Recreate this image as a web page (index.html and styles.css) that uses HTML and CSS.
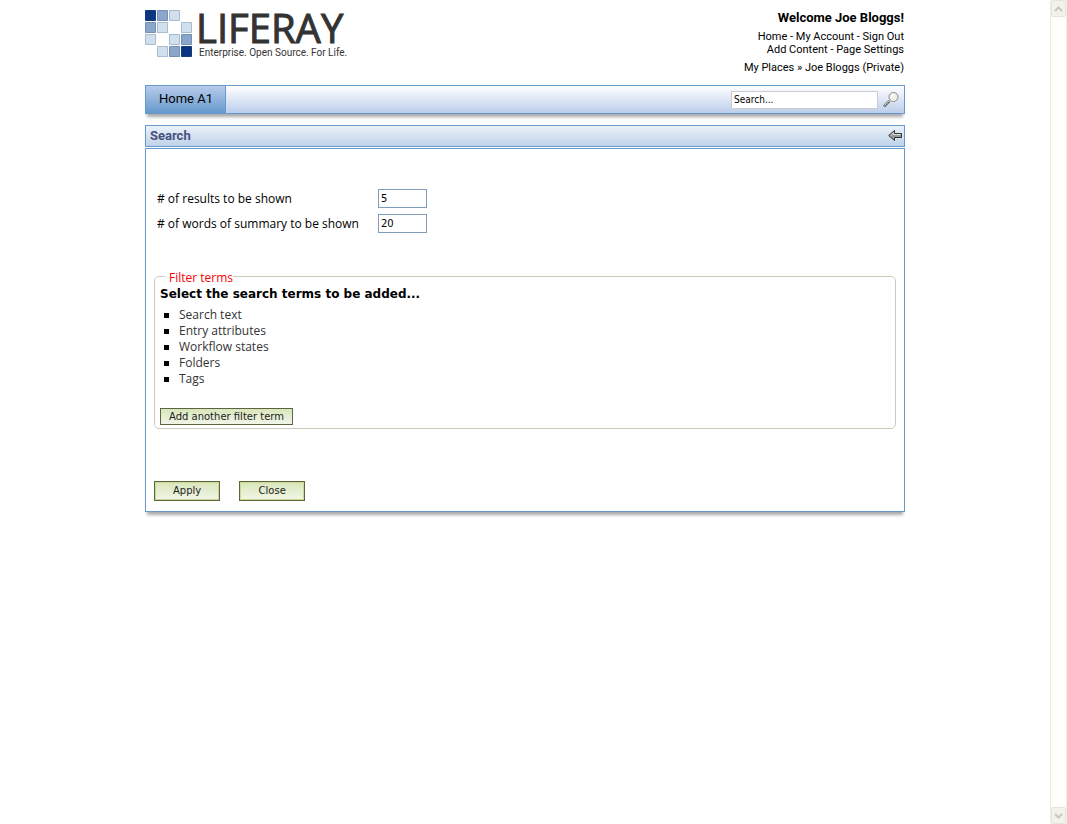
FILE: index.html
```html
<!DOCTYPE html>
<html lang="en">
<head>
<meta charset="utf-8">
<title>Search</title>
<link rel="stylesheet" href="styles.css">
</head>
<body>
<div class="page">
  <header class="banner">
    <a class="logo" href="#">
      <svg class="logo-mark" width="48" height="48" viewBox="0 0 48 48" aria-hidden="true">
        <g stroke-width="1">
          <path fill="#0b3580" stroke="#163c80" d="M.5.5h10v10h-10zM36.5 36.5h10v10h-10z"/>
          <path fill="#8ba6cb" stroke="#7590b4" d="M12.5.5h10v10h-10zM.5 12.5h10v10h-10zM36.5 24.5h10v10h-10zM24.5 36.5h10v10h-10z"/>
          <path fill="#d1e0ef" stroke="#a9bccd" d="M24.5.5h10v10h-10zM12.5 12.5h10v10h-10zM36.5 12.5h10v10h-10zM.5 24.5h10v10h-10zM24.5 24.5h10v10h-10zM12.5 36.5h10v10h-10z"/>
        </g>
      </svg>
      <span class="logo-words">
        <span class="logo-name">LIFERAY</span>
        <span class="logo-tag">Enterprise. Open Source. For Life.</span>
      </span>
    </a>
    <div class="user">
      <h2 class="welcome">Welcome Joe Bloggs!</h2>
      <div><a href="#">Home</a> - <a href="#">My Account</a> - <a href="#">Sign Out</a></div>
      <div><a href="#">Add Content</a> - <a href="#">Page Settings</a></div>
      <div class="places"><a href="#">My Places</a> » <a href="#">Joe Bloggs (Private)</a></div>
    </div>
  </header>

  <nav class="navbar">
    <a class="tab" href="#">Home A1</a>
    <form class="site-search">
      <input class="search-box" type="text" value="Search..." aria-label="Search">
      <button class="icon-button" type="button" aria-label="Go">
        <svg width="16" height="16" viewBox="0 0 16 16">
          <path d="M1 14.500L6.500 9" stroke="#6c6c6c" stroke-width="2.500"/>
          <path d="M1.500 13.500L6.500 8.500" stroke="#d0d0d0"/>
          <circle cx="10.500" cy="5" r="4.500" fill="#f0f0e9" stroke="#8a8a8a"/>
          <path d="M8 5Q8.500 3 11 3" fill="none" stroke="#fff" stroke-width="1.500"/>
        </svg>
      </button>
    </form>
  </nav>

  <main class="portlet">
    <header class="portlet-title">
      <h1>Search</h1>
      <a class="back" href="#" aria-label="Back">
        <svg width="14" height="12" viewBox="0 0 14 12">
          <path d="M.7 5.500L6.500.5V3.500h7v4h-7v3z" fill="#999" stroke="#333"/>
          <path d="M2.500 5.500L5.500 2.800V4.500h7" fill="none" stroke="#ddd"/>
        </svg>
      </a>
    </header>
    <form class="portlet-body">
      <div class="settings">
        <label for="results"># of results to be shown</label>
        <input id="results" type="text" value="5">
        <label for="words"># of words of summary to be shown</label>
        <input id="words" type="text" value="20">
      </div>
      <fieldset class="filters">
        <legend>Filter terms</legend>
        <h3>Select the search terms to be added...</h3>
        <ul>
          <li>Search text</li>
          <li>Entry attributes</li>
          <li>Workflow states</li>
          <li>Folders</li>
          <li>Tags</li>
        </ul>
        <button class="button small" type="button">Add another filter term</button>
      </fieldset>
      <div class="actions">
        <button class="button" type="button">Apply</button>
        <button class="button" type="button">Close</button>
      </div>
    </form>
  </main>
</div>
<div class="scrollbar">
  <button type="button" aria-label="Scroll up"><svg width="9" height="6" viewBox="0 0 9 6"><path d="M1 5l3.500-3.500L8 5" /></svg></button>
  <button type="button" aria-label="Scroll down"><svg width="9" height="6" viewBox="0 0 9 6"><path d="M1 1l3.500 3.500L8 1" /></svg></button>
</div>
</body>
</html>
```
FILE: styles.css
```css
* { box-sizing: border-box; }

body {
  display: flex;
  min-height: 100vh;
  margin: 0;
  background: #fff;
  color: #000;
  font: 11px/13px Roboto, sans-serif;
}

a { color: inherit; text-decoration: none; }
h1, h2, h3, ul { margin: 0; padding: 0; }
button, input { font: inherit; color: inherit; }
svg { display: block; }

.page {
  flex: 0 1 760px;
  min-width: 0;
  margin: 0 auto;
}

.banner {
  display: flex;
  justify-content: space-between;
  height: 85px;
  padding-top: 10px;
}

.logo { display: flex; gap: 3px; color: #333; }
.logo-words { display: flex; flex-direction: column; }
.logo-name { font: 40px/36px "Open Sans", sans-serif; -webkit-text-stroke: 1px #333; }
.logo-tag {
  padding-left: 3px;
  font: 10px/14px Roboto, sans-serif;
  white-space: nowrap;
}

.user { padding-right: 1px; text-align: right; }
.welcome { margin-bottom: 4px; font-size: 13px; line-height: 16px; }
.places { margin-top: 5px; }

.navbar {
  display: flex;
  justify-content: space-between;
  height: 29px;
  border: 1px solid #69c;
  background: linear-gradient(#fff, #bbcdec);
  box-shadow: 0 5px 3px -2px #aaa;
}

.tab {
  padding: 0 12px 0 13px;
  border-right: 1px solid #69c;
  background: linear-gradient(#b8cbeb, #69c);
  font: 13px/26px Roboto, sans-serif;
}

.site-search { display: flex; align-items: center; gap: 5px; padding-right: 5px; }
.search-box {
  width: 147px;
  height: 18px;
  padding: 0 2px;
  border: 1px solid #ccc;
  background: #fff;
  font: 10px "DejaVu Sans Condensed", sans-serif;
}
.icon-button { padding: 0; border: 0; background: none; }

.portlet { margin-top: 11px; box-shadow: 0 5px 3px -2px #aaa; }

.portlet-title {
  display: flex;
  align-items: center;
  justify-content: space-between;
  height: 22px;
  padding: 0 2px 0 4px;
  border: 1px solid #69c;
  background: linear-gradient(#ebf2f9, #bed2ea);
}
.portlet-title h1 { color: #47517e; font: bold 13px/20px Roboto, sans-serif; }

.portlet-body {
  margin-top: 1px;
  padding: 40px 8px 10px;
  border: 1px solid #69c;
  background: #fff;
  font: 12px/16px "Open Sans", sans-serif;
}

.settings {
  display: grid;
  grid-template-columns: 221px 49px;
  align-items: center;
  gap: 6px 0;
  padding-left: 3px;
}
.settings input {
  height: 19px;
  padding: 0 2px;
  border: 1px solid #7f9db9;
  font: 10px "DejaVu Sans", sans-serif;
}

.filters {
  margin: 33px 0 0;
  padding: 0 5px 3px;
  border: 1px solid #ccb;
  border-radius: 5px;
}
.filters legend { margin-left: 5px; padding: 4px 0 0 4px; color: #f00; }
.filters h3 { font: bold 12px/16px "DejaVu Sans", sans-serif; }
.filters ul {
  margin: 5px 0 21px;
  padding-left: 19px;
  color: #333;
  list-style: none;
}
.filters li { display: flex; align-items: center; }
.filters li::before {
  width: 5px;
  height: 5px;
  margin: 0 10px 0 -15px;
  background: #000;
  content: "";
}

.actions { display: flex; gap: 19px; margin-top: 52px; }

.button {
  height: 20px;
  min-width: 66px;
  padding: 0 18px;
  border: 1px solid #5d6540;
  background: linear-gradient(#d8e6bb, #f1f6e7);
  box-shadow: inset 0 0 0 1px #c9da8e;
  color: #222;
  font: 10px/16px "DejaVu Sans", sans-serif;
}
.button.small { height: 17px; padding: 0 8px; box-shadow: none; display: block; }

.scrollbar {
  display: flex;
  flex: 0 0 17px;
  flex-direction: column;
  justify-content: space-between;
  border: solid #eeede5;
  border-width: 0 1px;
  background: #fefefb;
}
.scrollbar button {
  display: grid;
  height: 17px;
  padding: 0;
  place-items: center;
  border: 1px solid #e6e5dc;
  border-radius: 2px;
  background: #f2f1ea;
}
.scrollbar path { fill: none; stroke: #c8c7bd; stroke-width: 2; }
```
